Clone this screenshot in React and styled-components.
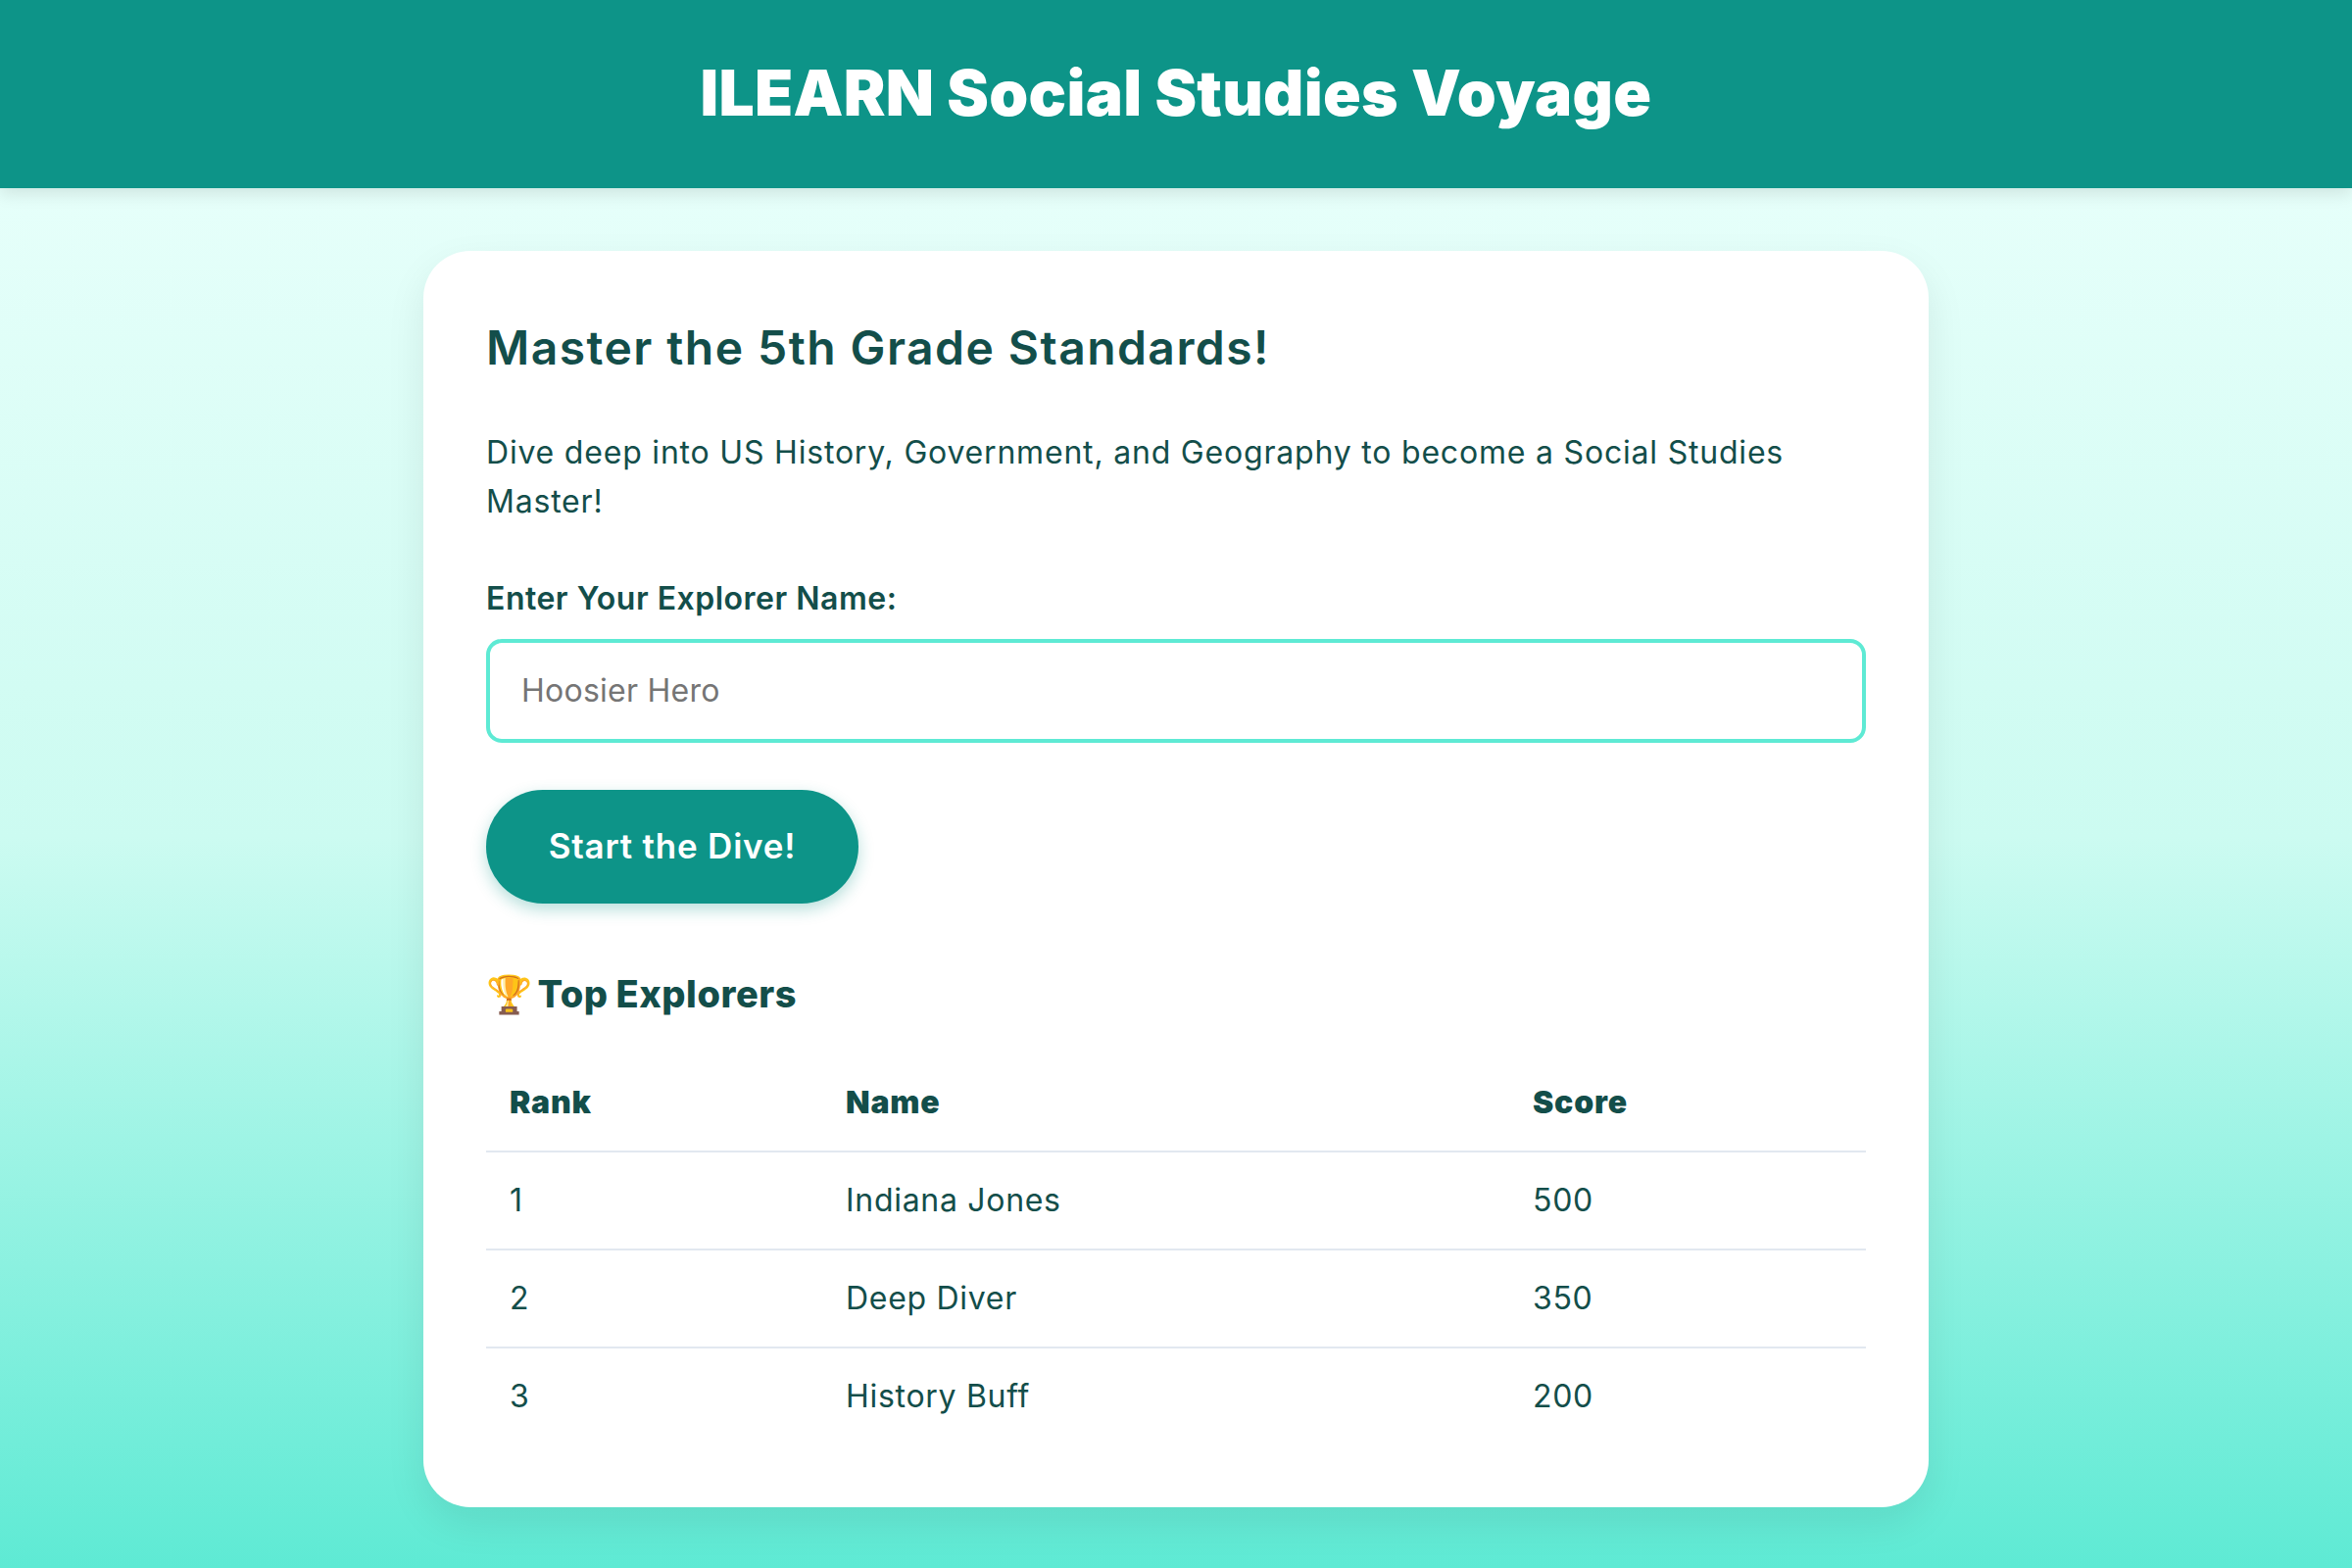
import React from "react"
import styled, { createGlobalStyle } from "styled-components"

const GlobalStyle = createGlobalStyle`
  * {
    box-sizing: border-box;
  }

  body {
    margin: 0;
    color: #134e4a;
    font-family: Inter, "Noto Sans", sans-serif;
  }
`

const players = [
  { rank: 1, name: "Indiana Jones", score: 500 },
  { rank: 2, name: "Deep Diver", score: 350 },
  { rank: 3, name: "History Buff", score: 200 },
]

const App = () => {
  return (
    <>
      <GlobalStyle />
      <Header>
        <Title>ILEARN Social Studies Voyage</Title>
      </Header>
      <Main>
        <Card>
          <Heading>Master the 5th Grade Standards!</Heading>
          <Intro>
            Dive deep into US History, Government, and Geography to become a
            Social Studies Master!
          </Intro>
          <Label htmlFor="explorer">Enter Your Explorer Name:</Label>
          <NameInput id="explorer" type="text" placeholder="Hoosier Hero" />
          <StartButton type="button">Start the Dive!</StartButton>
          <BoardTitle>
            <Trophy>🏆</Trophy> Top Explorers
          </BoardTitle>
          <Board>
            <colgroup>
              <col width="343" />
              <col width="701" />
              <col width="364" />
            </colgroup>
            <thead>
              <tr>
                <HeadCell>Rank</HeadCell>
                <HeadCell>Name</HeadCell>
                <HeadCell>Score</HeadCell>
              </tr>
            </thead>
            <tbody>
              {players.map((player) => (
                <Row key={player.rank}>
                  <Cell>{player.rank}</Cell>
                  <Cell>{player.name}</Cell>
                  <Cell>{player.score}</Cell>
                </Row>
              ))}
            </tbody>
          </Board>
        </Card>
      </Main>
    </>
  )
}

const Header = styled.header`
  position: relative;
  display: flex;
  align-items: center;
  justify-content: center;
  height: 192px;
  padding-bottom: 3px;
  background: #0d9488;
  box-shadow: 0 6px 16px rgba(0, 0, 0, 0.1);
`

const Title = styled.h1`
  margin: 0;
  color: #fff;
  font-size: 64px;
  font-weight: 900;
  letter-spacing: 0.3px;
`

const Main = styled.main`
  display: flex;
  justify-content: center;
  align-items: flex-start;
  min-height: 1408px;
  padding-top: 64px;
  background: linear-gradient(to bottom, #e6fffa 0%, #ccfbf1 47%, #5eead4 100%);
`

const Card = styled.section`
  width: 1536px;
  padding: 64px;
  background: #fff;
  border-radius: 48px;
  box-shadow: 0 16px 40px rgba(0, 0, 0, 0.08);
`

const Heading = styled.h2`
  margin: 0 0 47px;
  font-size: 48px;
  font-weight: 600;
  line-height: 70px;
  letter-spacing: 1.45px;
`

const Intro = styled.p`
  margin: 0 0 51px;
  font-size: 32px;
  line-height: 50px;
  letter-spacing: 0.8px;
`

const Label = styled.label`
  display: block;
  margin-bottom: 18px;
  font-size: 32px;
  font-weight: 600;
  line-height: 46px;
  letter-spacing: 0.5px;
`

const NameInput = styled.input`
  display: block;
  width: 100%;
  height: 106px;
  margin-bottom: 48px;
  padding: 0 32px 2px;
  border: 4px solid #5eead4;
  border-radius: 16px;
  color: #134e4a;
  font-family: inherit;
  font-size: 32px;
  letter-spacing: 0.25px;
  outline: none;

  &::placeholder {
    color: #757575;
  }
`

const StartButton = styled.button`
  display: block;
  width: 380px;
  height: 116px;
  padding: 0 0 2px;
  border: 0;
  border-radius: 58px;
  background: #0d9488;
  box-shadow: 0 6px 16px rgba(13, 148, 136, 0.3);
  color: #fff;
  font-family: inherit;
  font-size: 35px;
  font-weight: 600;
  letter-spacing: 0.8px;
`

const BoardTitle = styled.h3`
  margin: 62px 0 32px;
  font-size: 38px;
  font-weight: 800;
  line-height: 60px;
  letter-spacing: 0.55px;
  word-spacing: -1px;
`

const Trophy = styled.span`
  margin-right: -3px;
`

const Board = styled.table`
  width: 100%;
  border-collapse: separate;
  border-spacing: 0;
  table-layout: fixed;
`

const HeadCell = styled.th`
  height: 100px;
  padding: 0 24px 2px;
  border-bottom: 2px solid #e2e8f0;
  font-size: 32px;
  font-weight: 900;
  letter-spacing: 0.8px;
  text-align: left;
`

const Row = styled.tr`
  &:last-child td {
    height: 98px;
    border-bottom: 0;
  }
`

const Cell = styled.td`
  height: 100px;
  padding: 0 24px 2px;
  border-bottom: 2px solid #e2e8f0;
  font-size: 32px;
  letter-spacing: 0.7px;
`

export default App
